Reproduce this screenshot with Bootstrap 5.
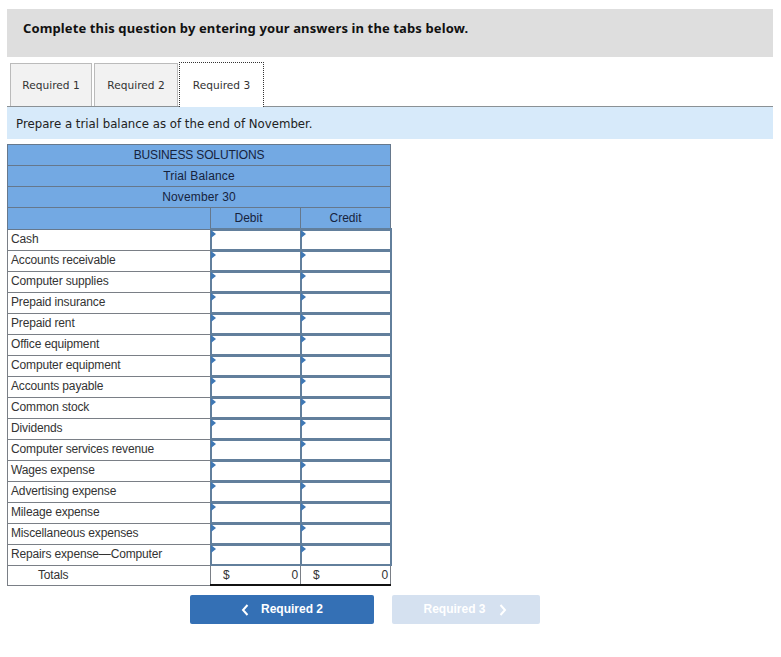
<!DOCTYPE html>
<html lang="en">
<head>
<meta charset="utf-8">
<title>Trial Balance</title>
<link rel="stylesheet" href="https://cdn.jsdelivr.net/npm/bootstrap@5.3.0/dist/css/bootstrap.min.css">
<style>
body{background:#fff;color:#222;font-family:"Liberation Sans",Arial,sans-serif;font-size:12px}
.page-wrap{padding:9px 8px 0 7px}
.banner{background:#dedede;height:48px;padding:10px 16px;font:700 13px/19px "Noto Sans",Verdana,sans-serif;letter-spacing:.12px;color:#111}
.tabbar{height:50px;padding:6px 0 0 3px;gap:2px;border-bottom:1px solid #8b9195;align-items:flex-end}
.tabitem{width:82px;height:43px;background:#f2f2f2;border:1px solid #bbb;border-bottom:0;font:10.6px/43px "DejaVu Sans",Verdana,sans-serif;color:#333;text-align:center}
.tabitem.second{width:84px}
.tabitem.current{width:85px;height:45px;background:#fff;border:1px dotted #333;border-bottom:0;line-height:45px;margin-bottom:-1px;margin-left:-1px}
.prompt{background:#d7eafa;height:32px;padding:0 9px;font:11.75px/34px "DejaVu Sans",Verdana,sans-serif;color:#222}
.tb{width:383px;margin-top:5px;border-collapse:collapse;table-layout:fixed;font-size:12px;letter-spacing:-.15px;color:#333}
.tb td,.tb th{height:21px;padding:0 3px;border:1px solid #7a7f86;line-height:19px;font-weight:400;white-space:nowrap}
.tb .hd td,.tb .hd th{background:#73a9e3;color:#16233d;text-align:center;border-color:#66788c;letter-spacing:.15px}
.tb .hd th{padding-top:1px;letter-spacing:0}
.tb .hd .debit{padding-right:17px}
.tb .hd .spacious{letter-spacing:-.15px}
.tb td.entry{position:relative;background:#fff;border:2px solid #627f9c;box-shadow:inset 0 1px 0 #627f9c;padding:0}
.tb td.entry::before{content:"";position:absolute;left:-1px;top:0;border-left:5px solid #3f78b5;border-top:4px solid transparent;border-bottom:4px solid transparent}
.tb .ttl td{height:19px;line-height:18px;border-bottom:1px solid #7a7f86}
.tb .ttl .amt{border-top:2px solid #111;border-bottom:2px solid #111;padding:0 2px 0 12px}
.tb .indent{padding-left:30px}
.amt-in{display:flex;justify-content:space-between}
.actions{width:533px;margin-top:9px;padding-left:183px;gap:18px}
.navbtn{height:29px;border:0;border-radius:2px;font:700 12px/29px "Liberation Sans",Arial,sans-serif;color:#fff;padding:0;display:flex;align-items:center;justify-content:center;gap:12px}
.navbtn.back{width:184px;background:#3470b5}
.navbtn.next{width:148px;background:#d5e1f0;gap:13px;padding-right:2px}
.navbtn svg{width:8px;height:12px;flex:none}
</style>
</head>
<body>
<div class="page-wrap">
  <div class="banner">Complete this question by entering your answers in the tabs below.</div>
  <div class="tabbar d-flex">
    <div class="tabitem">Required 1</div>
    <div class="tabitem second">Required 2</div>
    <div class="tabitem current">Required 3</div>
  </div>
  <div class="prompt">Prepare a trial balance as of the end of November.</div>
  <table class="tb">
    <colgroup><col style="width:203px"><col style="width:90px"><col style="width:90px"></colgroup>
    <tbody>
      <tr class="hd"><td colspan="3" class="spacious">BUSINESS SOLUTIONS</td></tr>
      <tr class="hd"><td colspan="3">Trial Balance</td></tr>
      <tr class="hd"><td colspan="3">November 30</td></tr>
      <tr class="hd"><td></td><th class="debit">Debit</th><th>Credit</th></tr>
      <tr><td>Cash</td><td class="entry"></td><td class="entry"></td></tr>
      <tr><td>Accounts receivable</td><td class="entry"></td><td class="entry"></td></tr>
      <tr><td>Computer supplies</td><td class="entry"></td><td class="entry"></td></tr>
      <tr><td>Prepaid insurance</td><td class="entry"></td><td class="entry"></td></tr>
      <tr><td>Prepaid rent</td><td class="entry"></td><td class="entry"></td></tr>
      <tr><td>Office equipment</td><td class="entry"></td><td class="entry"></td></tr>
      <tr><td>Computer equipment</td><td class="entry"></td><td class="entry"></td></tr>
      <tr><td>Accounts payable</td><td class="entry"></td><td class="entry"></td></tr>
      <tr><td>Common stock</td><td class="entry"></td><td class="entry"></td></tr>
      <tr><td>Dividends</td><td class="entry"></td><td class="entry"></td></tr>
      <tr><td>Computer services revenue</td><td class="entry"></td><td class="entry"></td></tr>
      <tr><td>Wages expense</td><td class="entry"></td><td class="entry"></td></tr>
      <tr><td>Advertising expense</td><td class="entry"></td><td class="entry"></td></tr>
      <tr><td>Mileage expense</td><td class="entry"></td><td class="entry"></td></tr>
      <tr><td>Miscellaneous expenses</td><td class="entry"></td><td class="entry"></td></tr>
      <tr><td>Repairs expense—Computer</td><td class="entry"></td><td class="entry"></td></tr>
      <tr class="ttl"><td class="indent">Totals</td>
        <td class="amt"><div class="amt-in"><span>$</span><span>0</span></div></td>
        <td class="amt"><div class="amt-in"><span>$</span><span>0</span></div></td></tr>
    </tbody>
  </table>
  <div class="actions d-flex">
    <button type="button" class="navbtn back"><svg viewBox="0 0 8 12"><path d="M6.5 1 2 6l4.500 5" fill="none" stroke="#fff" stroke-width="2"/></svg><span>Required 2</span></button>
    <button type="button" class="navbtn next"><span>Required 3</span><svg viewBox="0 0 8 12"><path d="M1.500 1 6 6l-4.500 5" fill="none" stroke="#fff" stroke-width="2"/></svg></button>
  </div>
</div>
<script src="https://cdn.jsdelivr.net/npm/bootstrap@5.3.0/dist/js/bootstrap.bundle.min.js"></script>
</body>
</html>
